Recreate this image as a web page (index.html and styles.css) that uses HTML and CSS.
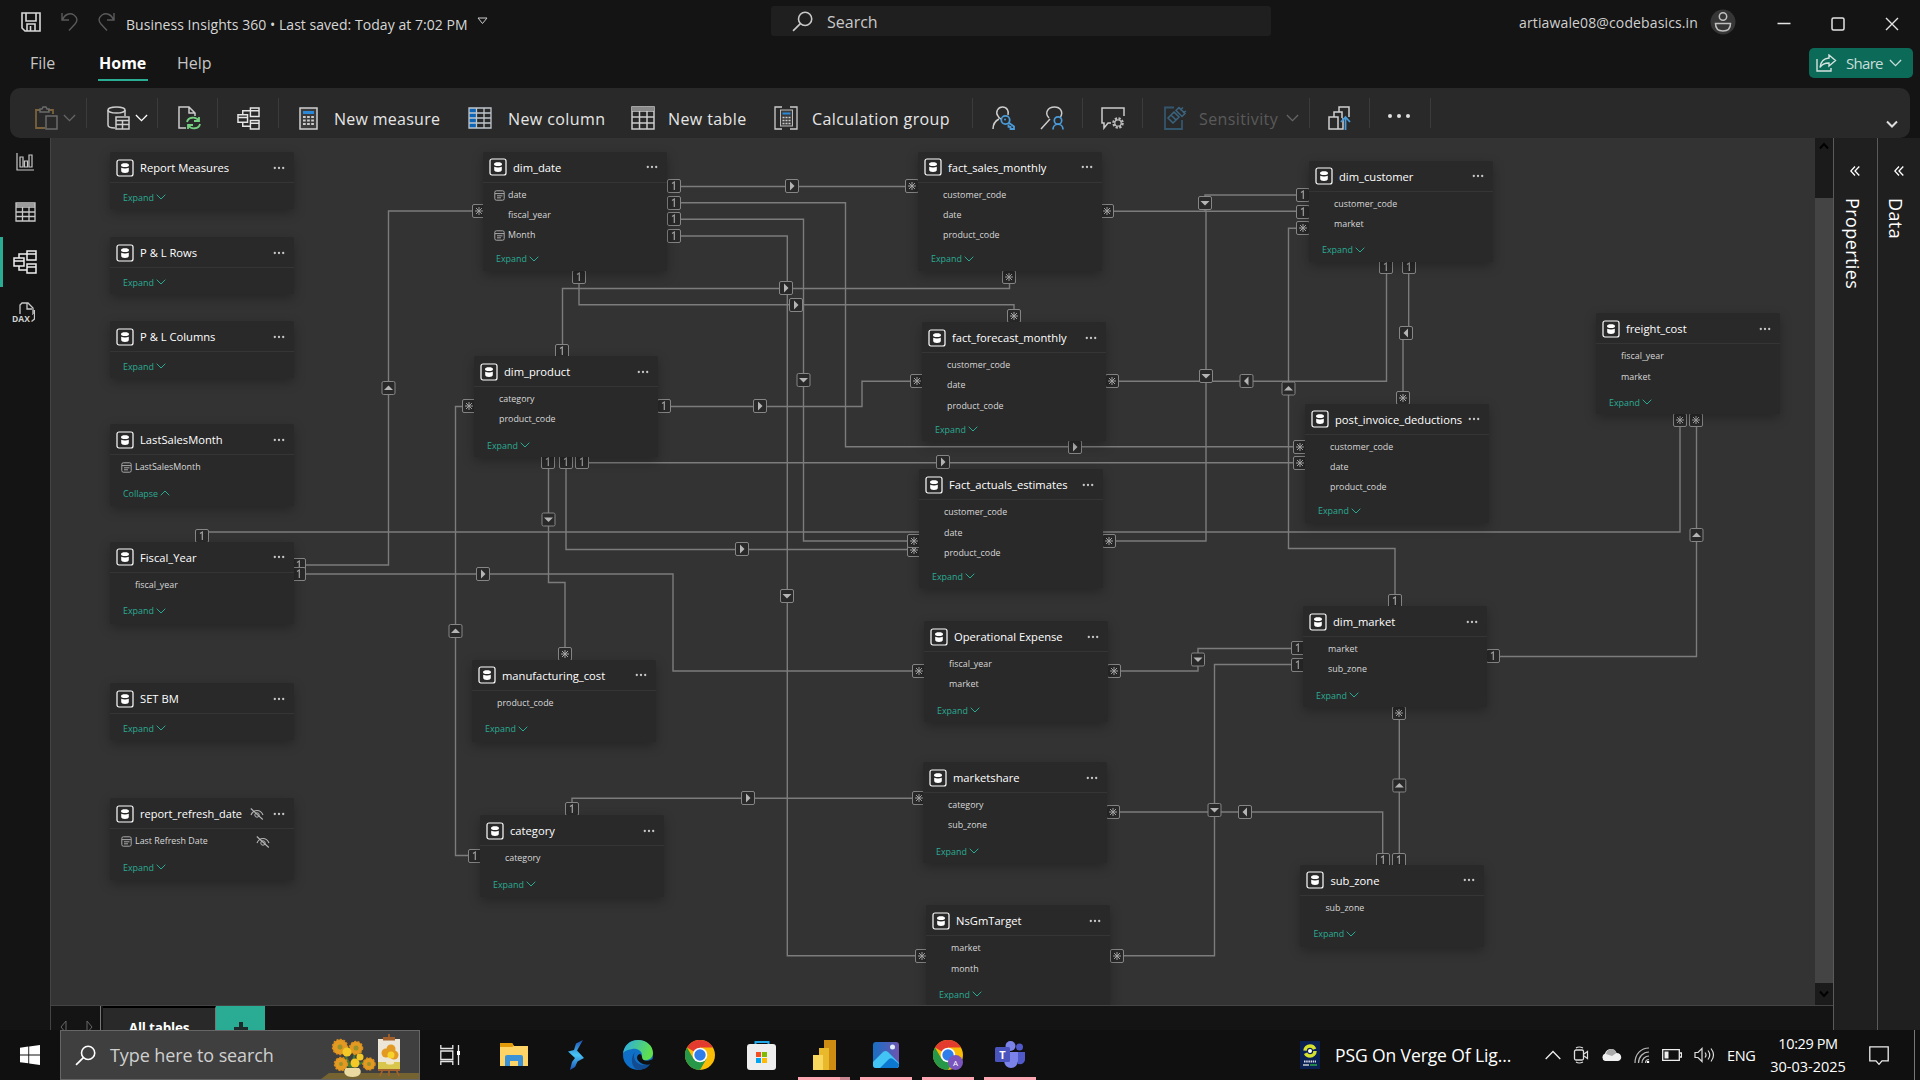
FILE: index.html
```html
<!DOCTYPE html>
<html lang="en">
<head>
<meta charset="utf-8">
<title>Business Insights 360</title>
<link rel="stylesheet" href="styles.css">
</head>
<body>
<svg class="defs" width="0" height="0" aria-hidden="true">
  <defs>
    <symbol id="table" viewBox="0 0 18 18"><rect x="1" y="1" width="16" height="16" rx="2" fill="none" stroke="#fff" stroke-width="1.2"/><path d="M5 6.2C5 4.6 6.6 4.2 9 4.2s4 .4 4 2c0 1-1 1.8-4 1.8S5 7.2 5 6.2zM5.2 8.7c2 1 5.600 1 7.600 0V12c0 1.300-1.500 1.900-3.800 1.900S5.200 13.300 5.200 12z" fill="#fff"/></symbol>
    <symbol id="dots" viewBox="0 0 12 4"><g fill="#c8c8c8"><circle cx="1.800" cy="2" r="1.150"/><circle cx="6" cy="2" r="1.150"/><circle cx="10.200" cy="2" r="1.150"/></g></symbol>
    <symbol id="down" viewBox="0 0 10 6"><path d="M.7.7 5 5 9.300.7" fill="none" stroke="currentColor"/></symbol>
    <symbol id="up" viewBox="0 0 10 6"><path d="M.7 5.300 5 1l4.300 4.300" fill="none" stroke="currentColor"/></symbol>
    <symbol id="date" viewBox="0 0 11 11"><rect x=".8" y=".8" width="9.400" height="9.400" rx="1.600" fill="none" stroke="#a8a8a8"/><path d="M1 3.600h9M3 5.800h5.500M3 7.800h4" stroke="#a8a8a8" fill="none"/></symbol>
    <symbol id="hidden" viewBox="0 0 14 12"><path d="M1 7C2.500 3.500 5 2.500 7 2.500S11.500 3.500 13 7M.8.5l12 11" fill="none" stroke="#b5b5b5" stroke-width="1.100"/><circle cx="7" cy="7" r="2.200" fill="none" stroke="#b5b5b5"/></symbol>
    <g id="one"><g transform="translate(7 7)"><rect x="-6.500" y="-6.500" width="13" height="13" rx="1.500" fill="#292929" stroke="#868686"/><path d="M-2-2.500.3-4V4" fill="none" stroke="#a5a5a5" stroke-width="1.200"/></g></g>
    <g id="many"><g transform="translate(7 7)"><rect x="-6.500" y="-6.500" width="13" height="13" rx="1.500" fill="#292929" stroke="#868686"/><path d="M0-4V4M-4 0H4M-3-3 3 3M3-3-3 3" fill="none" stroke="#a8a8a8"/></g></g>
    <g id="dir"><g transform="translate(7 7)"><rect x="-6.500" y="-6.500" width="13" height="13" rx="1.500" fill="#292929" stroke="#868686"/><path d="M-2-4.500 2.500 0-2 4.500z" fill="#b4b4b4"/></g></g>
    <symbol id="chrome" viewBox="0 0 30 30"><circle cx="15" cy="15" r="15" fill="#fbbc05"/><path d="M15 15 2 7.500A15 15 0 0 1 28 7.500H15z" fill="#e33b2e"/><path d="M2 7.500A15 15 0 0 0 15 30l6.500-11.300L15 15 8.500 18.800z" fill="#279847"/><circle cx="15" cy="15" r="7.300" fill="#fff"/><circle cx="15" cy="15" r="5.700" fill="#2f7de9"/></symbol>
    <symbol id="model" viewBox="0 0 24 24"><path d="M1 8h10v8H1zM14 1h9v9h-9zM14 14h9v9h-9zM1 11h10M14 4h9M14 17h9M6 8V4h8M6 16v4h8" fill="none" stroke="currentColor" stroke-width="1.500"/></symbol>
    <symbol id="glass" viewBox="0 0 20 20"><circle cx="12.500" cy="7.500" r="6.300" fill="none" stroke="currentColor" stroke-width="1.500"/><path d="M8 12 1 19" stroke="currentColor" stroke-width="1.600"/></symbol>
  </defs>
</svg>

<div class="app">
  <header class="titlebar">
    <div class="quick">
      <svg width="20" height="20" viewBox="0 0 20 20"><path d="M1 1h18v18H4l-3-3zM5 1v8h10V1M6 19v-7h8v7M9.500 14v5" fill="none" stroke="#d8d8d8" stroke-width="1.600"/></svg>
      <svg width="17" height="19" viewBox="0 0 17 19"><path d="M1 1v7h7M1.500 7.500C4 2 9 .5 13 3c4 3 3.500 6 1 9l-6 6.500" fill="none" stroke="#5a5a5a" stroke-width="1.400"/></svg>
      <svg width="17" height="19" viewBox="0 0 17 19"><path d="M16 1v7H9M15.500 7.500C13 2 8 .5 4 3 0 6 .5 9 3 12l6 6.500" fill="none" stroke="#5a5a5a" stroke-width="1.400"/></svg>
    </div>
    <span class="doc-title">Business Insights 360 • Last saved: Today at 7:02 PM</span>
    <svg class="doc-caret" width="11" height="8" viewBox="0 0 11 8"><path d="M1 1h9L5.500 6.500z" fill="none" stroke="#ccc"/></svg>
    <div class="search"><svg width="21" height="21"><use href="#glass"/></svg><span class="search-text">Search</span></div>
    <div class="account">
      <span class="email">artiawale08@codebasics.in</span>
      <svg width="26" height="26" viewBox="0 0 26 26"><circle cx="13" cy="13" r="12.500" fill="#363636"/><circle cx="13" cy="7.500" r="3.700" fill="none" stroke="#c0c0c0" stroke-width="1.500"/><path d="M5.500 14.500h15c0 5-3 7.500-7.500 7.500s-7.500-2.500-7.500-7.500z" fill="none" stroke="#c0c0c0" stroke-width="1.500"/></svg>
    </div>
    <div class="window-buttons">
      <svg width="14" height="14" viewBox="0 0 14 14"><path d="M.5 6.500h13" stroke="#e4e4e4" stroke-width="1.500"/></svg>
      <svg width="14" height="14" viewBox="0 0 14 14"><rect x="1" y="1" width="12" height="12" rx="1.500" fill="none" stroke="#e4e4e4" stroke-width="1.500"/></svg>
      <svg width="14" height="14" viewBox="0 0 14 14"><path d="m1 1 12 12M13 1 1 13" stroke="#e4e4e4" stroke-width="1.400"/></svg>
    </div>
  </header>

  <nav class="menu">
    <span class="tab">File</span><span class="tab tab-home">Home</span><span class="tab">Help</span>
    <button class="share">
      <svg width="21" height="18" viewBox="0 0 21 18"><path d="M1 5v12h14v-3M13 1l6.500 5.500L13 12V9C9 9 6 10 4 13.500 4.500 8 8 4.500 13 4z" fill="none" stroke="#d5e4e0" stroke-width="1.400"/></svg>
      <span class="share-text">Share</span>
      <svg width="13" height="8"><use href="#down"/></svg>
    </button>
  </nav>

  <div class="ribbon">
    <div class="group g-paste">
      <svg width="23" height="24" viewBox="0 0 23 24"><path d="M10 22H1V4h4M13 4h5v4" fill="none" stroke="#7b623a" stroke-width="1.800"/><path d="M5 6V3h2l1-2h3l1 2h2v3zM11 10h11v13H11z" fill="none" stroke="#6b6b6b" stroke-width="1.500"/></svg>
      <svg class="dim" width="13" height="8"><use href="#down"/></svg>
    </div>
    <div class="group g-data">
      <svg width="23" height="24" viewBox="0 0 23 24"><path d="M1 4v15c0 2 3 3 7 3M18 4v6" fill="none" stroke="#ccc" stroke-width="1.500"/><ellipse cx="9.500" cy="4" rx="8.500" ry="3" fill="none" stroke="#ccc" stroke-width="1.500"/><path d="M9 11h13v12H9zM9 14.500h13M9 18.500h13M15.500 14v9" fill="none" stroke="#ccc" stroke-width="1.500"/></svg>
      <svg class="bright" width="13" height="8"><use href="#down"/></svg>
    </div>
    <div class="group g-icon"><svg class="refresh" width="23" height="24" viewBox="0 0 23 24"><path d="M8 22H1V1h10l6 6v3M11 1v6h6" fill="none" stroke="#ccc" stroke-width="1.500"/><path d="M9 16c1-5 9-6 12-1M21 11v4h-5M22 18c-1 5-9 6-12 1M10 23v-4h5" fill="none" stroke="#74cf80" stroke-width="1.800"/></svg></div>
    <div class="group g-icon model-icon"><svg width="23" height="23"><use href="#model"/></svg></div>
    <div class="group g-new">
      <svg width="19" height="23" viewBox="0 0 19 23"><rect x="1" y="1" width="17" height="21" fill="#3b3b3b" stroke="#d0d0d0" stroke-width="1.500"/><path d="M4 4h11v3H4z" fill="#2b88d8"/><path d="M4 10h11M4 13.500h11M4 17h11" stroke="#ccc" stroke-width="2" stroke-dasharray="2.700 1.400"/></svg>
      <span class="label l-measure">New measure</span>
      <svg width="24" height="22" viewBox="0 0 24 22"><path d="M1 1h8v20H1z" fill="#0f65b5"/><path d="M1 1h22v20H1zM8.500 1v20M16 1v20M1 6h22M1 11h22M1 16h22" fill="none" stroke="#bfc6cc" stroke-width="1.300"/></svg>
      <span class="label l-column">New column</span>
      <svg width="24" height="24" viewBox="0 0 24 24"><path d="M1 1h22v22H1zM1 5h22M1 11h22M1 17h22M8.500 5v18M16 5v18" fill="none" stroke="#ccc" stroke-width="1.500"/><path d="M1 1h22v4H1z" fill="#888"/></svg>
      <span class="label l-table">New table</span>
      <svg width="24" height="24" viewBox="0 0 24 24"><path d="M8 1H1v22h7M16 1h7v22h-7" fill="none" stroke="#ccc" stroke-width="1.300"/><rect x="6.500" y="4" width="12" height="16" fill="#3b3b3b" stroke="#bbb"/><path d="M8.500 6.500h8v2h-8z" fill="#2b88d8"/><path d="M8.500 11.500h8M8.500 14.500h8M8.500 17.500h8" stroke="#ccc" stroke-width="1.500" stroke-dasharray="2 1"/></svg>
      <span class="label l-group">Calculation group</span>
    </div>
    <div class="group g-roles">
      <svg width="24" height="24" viewBox="0 0 24 24"><path d="M1 23c0-5 2-8 6-10M16 9c1-4-1-8-5.500-8S3 6 6 10c1 2 3 3 4 3" fill="none" stroke="#ccc" stroke-width="1.500"/><path d="m16.500 16.500 5.500 4V23h-3.500v-2.200h-2V18.500" fill="none" stroke="#4a9bd8" stroke-width="1.800"/><circle cx="13.500" cy="14" r="4.200" fill="none" stroke="#4a9bd8" stroke-width="1.800"/><circle cx="13" cy="13.500" r="1" fill="#4a9bd8"/></svg>
      <svg width="24" height="24" viewBox="0 0 24 24"><path d="M1 23 10 13M9 12C4 7 8 1 14.500 1c6 0 9 5 6 10" fill="none" stroke="#ccc" stroke-width="1.500"/><circle cx="18" cy="14.500" r="3.700" fill="none" stroke="#4a9bd8" stroke-width="1.700"/><path d="M13 23.500c0-7 10-7 10 0" fill="none" stroke="#4a9bd8" stroke-width="1.700"/></svg>
    </div>
    <div class="group g-icon"><svg width="24" height="24" viewBox="0 0 24 24"><path d="M10 17H7l-4 5v-5H1V2h22v8" fill="none" stroke="#ccc" stroke-width="1.500"/><circle cx="17" cy="17" r="4.600" fill="none" stroke="#bbb" stroke-width="2.400" stroke-dasharray="2.200 1.400"/><circle cx="17" cy="17" r="3.200" fill="none" stroke="#bbb" stroke-width="1.300"/></svg></div>
    <div class="group g-sens">
      <svg width="23" height="24" viewBox="0 0 23 24"><path d="M10 1.500H1V23h17V14" fill="none" stroke="#33566d" stroke-width="1.800"/><path d="m4 12 6-6 5 5-6 6zM7 9l5 5M12 4.500l3-3 6 6-3 3zM16 4l3-2.500M19 7l3-2" fill="none" stroke="#3a6580" stroke-width="1.500"/></svg>
      <span class="label l-sens">Sensitivity</span>
      <svg class="dim" width="13" height="8"><use href="#down"/></svg>
    </div>
    <div class="group g-icon"><svg width="24" height="24" viewBox="0 0 24 24"><path d="M1 11h9v12H1zM6 11V6h8v6M11 6V1h10v10M10 23h5V12" fill="none" stroke="#d0d0d0" stroke-width="1.500"/><path d="M17.500 24V12M13 16l4.500-5 4.500 5" fill="none" stroke="#4a9bd8" stroke-width="1.800"/></svg></div>
    <div class="group g-icon more"><svg width="24" height="6" viewBox="0 0 24 6"><g fill="#e0e0e0"><circle cx="3" cy="3" r="2"/><circle cx="12" cy="3" r="2"/><circle cx="21" cy="3" r="2"/></g></svg></div>
    <svg class="collapse" width="12" height="8" viewBox="0 0 12 8"><path d="m1 1.500 5 5 5-5" fill="none" stroke="#ddd" stroke-width="2"/></svg>
  </div>

  <main class="workspace">
    <aside class="rail">
      <div class="rail-item"><svg width="18" height="18" viewBox="0 0 18 18"><path d="M1 0v17h17M4 14V4h3v10zM8.500 14V8h3v6zM13 14V2h3v12z" fill="none" stroke="#c8c8c8" stroke-width="1.200"/></svg></div>
      <div class="rail-item"><svg width="21" height="20" viewBox="0 0 21 20"><path d="M1 1h19v18H1zM1 5h19M1 10h19M1 14.500h19M7.500 5v14M14 5v14M1 3h19" fill="none" stroke="#c8c8c8" stroke-width="1.300"/></svg></div>
      <div class="rail-item active"><svg width="24" height="24"><use href="#model"/></svg></div>
      <div class="rail-item dax"><svg width="20" height="20" viewBox="0 0 20 20"><path d="M5 12V3l2-2h6l5 5v7M12 1v6h5M19.500 8v9l-3 2.500" fill="none" stroke="#c8c8c8" stroke-width="1.300"/></svg><span class="dax-text">DAX</span></div>
    </aside>

    <section class="center">
      <div class="view">
        <div class="canvas">
          <svg class="links" width="1764" height="867" viewBox="51 138 1764 867">
            <g class="wires">
              <path d="M299 565H388.500V211H479"/>
              <path d="M299 574H673V671H919"/>
              <path d="M202 532H1680V420"/>
              <path d="M673.500 186.500H912"/>
              <path d="M673.500 202.800H845.500V446.700H1300"/>
              <path d="M673.500 219.300H803.500V541H914"/>
              <path d="M673.500 236H787.300V955.700H921"/>
              <path d="M579 276V304.700H1014V315"/>
              <path d="M562.500 350V288.500H1009.500V276"/>
              <path d="M664 406.500H862V381.300H917"/>
              <path d="M548.500 462V582.500H565V653"/>
              <path d="M566 462V549.500H914"/>
              <path d="M582 462.700H1300"/>
              <path d="M469 406.500H455.500V855.500H474"/>
              <path d="M572 808V798.300H918"/>
              <path d="M1107 211.200H1303"/>
              <path d="M1303 195H1205V211H1206V541H1109"/>
              <path d="M1112 381.200H1386.500V267"/>
              <path d="M1408.700 267V333H1403V398"/>
              <path d="M1303 228.300H1288.500V548.500H1395V600"/>
              <path d="M1114 671H1198V648.500H1297"/>
              <path d="M1297 664.500H1214.500V955.700H1117"/>
              <path d="M1113 812H1382.700V859"/>
              <path d="M1399.300 859V712"/>
              <path d="M1493 656.500H1696.500V420"/>
            </g>
            <g class="ends">
              <use href="#one" x="292" y="558"/><use href="#one" x="292" y="567"/><use href="#one" x="195" y="529"/>
              <use href="#one" x="667" y="179"/><use href="#one" x="667" y="196"/><use href="#one" x="667" y="212"/><use href="#one" x="667" y="229"/>
              <use href="#one" x="572" y="270"/><use href="#one" x="555" y="344"/><use href="#one" x="657" y="399"/>
              <use href="#one" x="541" y="455"/><use href="#one" x="559" y="455"/><use href="#one" x="575" y="455"/>
              <use href="#one" x="468" y="849"/><use href="#one" x="565" y="802"/>
              <use href="#one" x="1296" y="188"/><use href="#one" x="1296" y="205"/><use href="#one" x="1379" y="260"/><use href="#one" x="1402" y="260"/>
              <use href="#one" x="1388" y="594"/><use href="#one" x="1291" y="641"/><use href="#one" x="1291" y="658"/><use href="#one" x="1486" y="649"/>
              <use href="#one" x="1376" y="853"/><use href="#one" x="1392" y="853"/>
              <use href="#many" x="472" y="204"/><use href="#many" x="905" y="179"/><use href="#many" x="910" y="374"/>
              <use href="#many" x="907" y="543"/><use href="#many" x="907" y="534"/><use href="#many" x="462" y="399"/><use href="#many" x="558" y="647"/>
              <use href="#many" x="912" y="664"/><use href="#many" x="912" y="791"/><use href="#many" x="915" y="949"/>
              <use href="#many" x="1002" y="270"/><use href="#many" x="1007" y="309"/><use href="#many" x="1100" y="204"/><use href="#many" x="1105" y="374"/>
              <use href="#many" x="1102" y="534"/><use href="#many" x="1107" y="664"/><use href="#many" x="1106" y="805"/><use href="#many" x="1110" y="949"/>
              <use href="#many" x="1296" y="221"/><use href="#many" x="1293" y="440"/><use href="#many" x="1293" y="456"/><use href="#many" x="1396" y="391"/>
              <use href="#many" x="1673" y="413"/><use href="#many" x="1689" y="413"/><use href="#many" x="1392" y="706"/>
            </g>
            <g class="arrows">
              <use href="#dir" x="-7" y="-7" transform="translate(388.500 388) rotate(-90)"/>
              <use href="#dir" x="476" y="567"/><use href="#dir" x="785" y="179"/><use href="#dir" x="1068" y="440"/>
              <use href="#dir" x="-7" y="-7" transform="translate(803.500 380) rotate(90)"/>
              <use href="#dir" x="-7" y="-7" transform="translate(787 596) rotate(90)"/>
              <use href="#dir" x="779" y="281"/><use href="#dir" x="789" y="298"/><use href="#dir" x="753" y="399"/>
              <use href="#dir" x="-7" y="-7" transform="translate(548.500 519.500) rotate(90)"/>
              <use href="#dir" x="735" y="542"/><use href="#dir" x="936" y="455"/><use href="#dir" x="741" y="791"/>
              <use href="#dir" x="-7" y="-7" transform="translate(455.500 631) rotate(-90)"/>
              <use href="#dir" x="-7" y="-7" transform="translate(1205 203) rotate(90)"/>
              <use href="#dir" x="-7" y="-7" transform="translate(1206 376) rotate(90)"/>
              <use href="#dir" x="-7" y="-7" transform="translate(1246.500 381) rotate(180)"/>
              <use href="#dir" x="-7" y="-7" transform="translate(1406 333) rotate(180)"/>
              <use href="#dir" x="-7" y="-7" transform="translate(1288.500 388.500) rotate(-90)"/>
              <use href="#dir" x="-7" y="-7" transform="translate(1198 659.500) rotate(90)"/>
              <use href="#dir" x="-7" y="-7" transform="translate(1214.500 810) rotate(90)"/>
              <use href="#dir" x="-7" y="-7" transform="translate(1245 812) rotate(180)"/>
              <use href="#dir" x="-7" y="-7" transform="translate(1399.300 785.500) rotate(-90)"/>
              <use href="#dir" x="-7" y="-7" transform="translate(1696.500 535) rotate(-90)"/>
            </g>
          </svg>

          <div class="board">
            <article class="node rows-0 n-report-measures"><header><svg class="t"><use href="#table"/></svg><h2>Report Measures</h2><svg class="d"><use href="#dots"/></svg></header><footer>Expand<svg><use href="#down"/></svg></footer></article>
            <article class="node rows-0 n-pl-rows"><header><svg class="t"><use href="#table"/></svg><h2>P &amp; L Rows</h2><svg class="d"><use href="#dots"/></svg></header><footer>Expand<svg><use href="#down"/></svg></footer></article>
            <article class="node rows-0 n-pl-columns"><header><svg class="t"><use href="#table"/></svg><h2>P &amp; L Columns</h2><svg class="d"><use href="#dots"/></svg></header><footer>Expand<svg><use href="#down"/></svg></footer></article>
            <article class="node rows-1 n-last-sales"><header><svg class="t"><use href="#table"/></svg><h2>LastSalesMonth</h2><svg class="d"><use href="#dots"/></svg></header><p><svg class="c"><use href="#date"/></svg>LastSalesMonth</p><footer>Collapse<svg><use href="#up"/></svg></footer></article>
            <article class="node rows-1 n-fiscal-year"><header><svg class="t"><use href="#table"/></svg><h2>Fiscal_Year</h2><svg class="d"><use href="#dots"/></svg></header><p>fiscal_year</p><footer>Expand<svg><use href="#down"/></svg></footer></article>
            <article class="node rows-0 n-set-bm"><header><svg class="t"><use href="#table"/></svg><h2>SET BM</h2><svg class="d"><use href="#dots"/></svg></header><footer>Expand<svg><use href="#down"/></svg></footer></article>
            <article class="node rows-1 n-refresh"><header><svg class="t"><use href="#table"/></svg><h2>report_refresh_date</h2><svg class="h"><use href="#hidden"/></svg><svg class="d"><use href="#dots"/></svg></header><p><svg class="c"><use href="#date"/></svg>Last Refresh Date<svg class="h"><use href="#hidden"/></svg></p><footer>Expand<svg><use href="#down"/></svg></footer></article>
            <article class="node rows-3 n-dim-date"><header><svg class="t"><use href="#table"/></svg><h2>dim_date</h2><svg class="d"><use href="#dots"/></svg></header><p><svg class="c"><use href="#date"/></svg>date</p><p>fiscal_year</p><p><svg class="c"><use href="#date"/></svg>Month</p><footer>Expand<svg><use href="#down"/></svg></footer></article>
            <article class="node rows-2 n-dim-product"><header><svg class="t"><use href="#table"/></svg><h2>dim_product</h2><svg class="d"><use href="#dots"/></svg></header><p>category</p><p>product_code</p><footer>Expand<svg><use href="#down"/></svg></footer></article>
            <article class="node rows-1 n-mfg-cost"><header><svg class="t"><use href="#table"/></svg><h2>manufacturing_cost</h2><svg class="d"><use href="#dots"/></svg></header><p>product_code</p><footer>Expand<svg><use href="#down"/></svg></footer></article>
            <article class="node rows-1 n-category"><header><svg class="t"><use href="#table"/></svg><h2>category</h2><svg class="d"><use href="#dots"/></svg></header><p>category</p><footer>Expand<svg><use href="#down"/></svg></footer></article>
            <article class="node rows-3 n-sales"><header><svg class="t"><use href="#table"/></svg><h2>fact_sales_monthly</h2><svg class="d"><use href="#dots"/></svg></header><p>customer_code</p><p>date</p><p>product_code</p><footer>Expand<svg><use href="#down"/></svg></footer></article>
            <article class="node rows-3 n-forecast"><header><svg class="t"><use href="#table"/></svg><h2>fact_forecast_monthly</h2><svg class="d"><use href="#dots"/></svg></header><p>customer_code</p><p>date</p><p>product_code</p><footer>Expand<svg><use href="#down"/></svg></footer></article>
            <article class="node rows-3 n-actuals"><header><svg class="t"><use href="#table"/></svg><h2>Fact_actuals_estimates</h2><svg class="d"><use href="#dots"/></svg></header><p>customer_code</p><p>date</p><p>product_code</p><footer>Expand<svg><use href="#down"/></svg></footer></article>
            <article class="node rows-2 n-opex"><header><svg class="t"><use href="#table"/></svg><h2>Operational Expense</h2><svg class="d"><use href="#dots"/></svg></header><p>fiscal_year</p><p>market</p><footer>Expand<svg><use href="#down"/></svg></footer></article>
            <article class="node rows-2 n-marketshare"><header><svg class="t"><use href="#table"/></svg><h2>marketshare</h2><svg class="d"><use href="#dots"/></svg></header><p>category</p><p>sub_zone</p><footer>Expand<svg><use href="#down"/></svg></footer></article>
            <article class="node rows-2 n-target"><header><svg class="t"><use href="#table"/></svg><h2>NsGmTarget</h2><svg class="d"><use href="#dots"/></svg></header><p>market</p><p>month</p><footer>Expand<svg><use href="#down"/></svg></footer></article>
            <article class="node rows-2 n-customer"><header><svg class="t"><use href="#table"/></svg><h2>dim_customer</h2><svg class="d"><use href="#dots"/></svg></header><p>customer_code</p><p>market</p><footer>Expand<svg><use href="#down"/></svg></footer></article>
            <article class="node rows-3 n-deductions"><header><svg class="t"><use href="#table"/></svg><h2>post_invoice_deductions</h2><svg class="d"><use href="#dots"/></svg></header><p>customer_code</p><p>date</p><p>product_code</p><footer>Expand<svg><use href="#down"/></svg></footer></article>
            <article class="node rows-2 n-freight"><header><svg class="t"><use href="#table"/></svg><h2>freight_cost</h2><svg class="d"><use href="#dots"/></svg></header><p>fiscal_year</p><p>market</p><footer>Expand<svg><use href="#down"/></svg></footer></article>
            <article class="node rows-2 n-market"><header><svg class="t"><use href="#table"/></svg><h2>dim_market</h2><svg class="d"><use href="#dots"/></svg></header><p>market</p><p>sub_zone</p><footer>Expand<svg><use href="#down"/></svg></footer></article>
            <article class="node rows-1 n-sub-zone"><header><svg class="t"><use href="#table"/></svg><h2>sub_zone</h2><svg class="d"><use href="#dots"/></svg></header><p>sub_zone</p><footer>Expand<svg><use href="#down"/></svg></footer></article>
          </div>
        </div>
        <div class="scrollbar">
          <div class="sb-top"><svg width="10" height="8" viewBox="0 0 10 8"><path d="m1 6.500 4-4.500 4 4.500" fill="none" stroke="#000" stroke-width="2"/></svg></div>
          <div class="sb-thumb"></div>
          <div class="sb-bottom"><svg width="10" height="8" viewBox="0 0 10 8"><path d="m1 1.500 4 4.500 4-4.500" fill="none" stroke="#000" stroke-width="2"/></svg></div>
        </div>
      </div>
      <div class="pages">
        <div class="page-nav">
          <svg width="7" height="14" viewBox="0 0 7 14"><path d="M6 1v12L1 7z" fill="none" stroke="#666"/></svg>
          <svg width="7" height="14" viewBox="0 0 7 14"><path d="M1 1v12l5-6z" fill="none" stroke="#666"/></svg>
        </div>
        <div class="page-tab">All tables</div>
        <div class="page-add"><svg width="14" height="14" viewBox="0 0 14 14"><path d="M7 0v14M0 7h14" stroke="#1c2b29" stroke-width="4"/></svg></div>
      </div>
    </section>

    <aside class="pane"><svg width="10" height="10" viewBox="0 0 10 10"><path d="M5 .5.8 5 5 9.500M9.300.5 5 5l4.300 4.500" fill="none" stroke="#fff" stroke-width="1.300"/></svg><span class="pane-title">Properties</span></aside>
    <aside class="pane"><svg width="10" height="10" viewBox="0 0 10 10"><path d="M5 .5.8 5 5 9.500M9.300.5 5 5l4.300 4.500" fill="none" stroke="#fff" stroke-width="1.300"/></svg><span class="pane-title">Data</span></aside>
  </main>

  <footer class="taskbar">
    <div class="start"><svg width="20" height="20" viewBox="0 0 20 20"><path d="M0 2.800 8.300 1.600v7.900H0zM9.200 1.500 20 0v9.500H9.200zM0 10.400h8.300v7.900L0 17.200zM9.200 10.400H20V20L9.200 18.500z" fill="#fff"/></svg></div>
    <div class="task-search">
      <svg width="21" height="21"><use href="#glass"/></svg>
      <span class="task-search-text">Type here to search</span>
      <svg class="flowers" width="98" height="48" viewBox="0 0 98 48">
        <path d="M0 48 8 42H98V48z" fill="#756431"/>
        <path d="M30 36 20 16M30 36 36 16M30 36 46 30M30 36 20 32" stroke="#3d7a32" stroke-width="2"/>
        <g fill="#e29a22" stroke="#d98d1c" stroke-width="1.500" stroke-dasharray="2 1.500"><circle cx="19" cy="16" r="7.500"/><circle cx="35" cy="17" r="6.500"/><circle cx="20" cy="33" r="6.500"/><circle cx="48" cy="33" r="6"/></g>
        <g fill="#f3c927"><circle cx="26" cy="21" r="4.500"/><circle cx="34" cy="32" r="4.500"/><circle cx="39" cy="26" r="3.500"/></g>
        <g fill="#99912b"><circle cx="19" cy="16" r="2.500"/><circle cx="35" cy="17" r="2.500"/><circle cx="20" cy="33" r="2"/><circle cx="48" cy="33" r="2"/></g>
        <path d="M25 37h13c4 4 1 9-6.500 9S21 41 25 37z" fill="#ead9a0"/>
        <path d="M62 38 59 45M75 38l3 7M68 3v42" stroke="#a2602c" stroke-width="1.800"/>
        <path d="M57 8h22v30H57z" fill="#ece6d8"/><path d="M57 31h22v7H57z" fill="#d9c64d"/><path d="M62 6h12v3.500H62zM57 38h22v2H57z" fill="#a2602c"/>
        <g fill="#e29a22"><circle cx="65" cy="22" r="4.500"/><circle cx="70" cy="18" r="4.500"/><circle cx="73" cy="24" r="4.500"/></g><circle cx="70" cy="24" r="3.500" fill="#f7d22d"/><path d="M65 30h8v2c0 2-8 2-8 0z" fill="#f2e7bd"/>
      </svg>
    </div>
    <div class="task-view"><svg width="20" height="20" viewBox="0 0 20 20"><path d="M.8 0v3.500h12V0M.8 20v-3.500h12V20M.8 6h12v8.500H.8zM18.500 0v20" fill="none" stroke="#e6e6e6" stroke-width="1.300"/><path d="M17 6h3v4h-3z" fill="#fff"/></svg></div>
    <div class="apps">
      <div class="app-icon"><svg width="28" height="24" viewBox="0 0 28 24"><path d="M0 0h12l2 3h14v20H0z" fill="#ffd466"/><path d="M0 0h12l2 3-2 1H0z" fill="#e39a08"/><path d="M5 23V14q0-2 2-2h14q2 0 2 2v9h-5v-5h-8v5z" fill="#3c92d6"/></svg></div>
      <div class="app-icon"><svg width="16" height="30" viewBox="0 0 16 30"><defs><linearGradient id="sg" x1="0" y1="0" x2="0" y2="1"><stop offset="0" stop-color="#1e50b4"/><stop offset=".5" stop-color="#48c5f6"/><stop offset="1" stop-color="#1d53ba"/></linearGradient></defs><path d="M15 0 8 3.500 6 10l-6 1.500L7 18l-3 4-2 8 5-3 2.500-5.500L16 18 9 10.500z" fill="url(#sg)"/></svg></div>
      <div class="app-icon"><svg width="30" height="30" viewBox="0 0 30 30"><defs><linearGradient id="eg" x1="0" y1="0" x2="1" y2=".3"><stop offset="0" stop-color="#2aa9ee"/><stop offset="1" stop-color="#5fe04c"/></linearGradient></defs><circle cx="15" cy="15" r="15" fill="#0f6fc6"/><path d="M0 14C1 5 7 0 15 0c9 0 15 6 15 13 0 6-6 8-10 7-3-1-1-3-1-5 0-4-5-7-10-6S1 11 0 14z" fill="url(#eg)"/><path d="M12 12c-3 6 1 13 9 13 3 0 5-1 7-2-3 5-8 7-13 7C8 28 7 17 12 12z" fill="#124b8f"/><path d="M19 17c0 4 5 5 11 2l-2 5c-6 2-13-1-14-6 0-3 2-4 3-4s2 2 2 3z" fill="#101010"/></svg></div>
      <div class="app-icon"><svg width="30" height="30"><use href="#chrome"/></svg></div>
      <div class="app-icon"><svg width="30" height="30" viewBox="0 0 30 30"><path d="M8.500 5V2h13v3" fill="none" stroke="#20a8e8" stroke-width="2"/><rect y="4" width="29" height="26" rx="3" fill="#eee"/><path d="M9 12h5v5H9z" fill="#f25022"/><path d="M15 12h5v5h-5z" fill="#7fba00"/><path d="M9 18h5v5H9z" fill="#00a4ef"/><path d="M15 18h5v5h-5z" fill="#ffb900"/></svg></div>
      <div class="app-icon running split"><svg width="24" height="30" viewBox="0 0 24 30"><path d="M12 0h12v30H12z" fill="#cf8c12"/><path d="M7 8h10v22H7z" fill="#e9b82b"/><path d="M1 15h10v15H1z" fill="#f7d85c"/></svg></div>
      <div class="app-icon running"><svg width="26" height="26" viewBox="0 0 26 26"><defs><linearGradient id="ph" x1="0" y1="0" x2="1" y2="0"><stop offset="0" stop-color="#176fc3"/><stop offset="1" stop-color="#6c55b2"/></linearGradient></defs><rect width="26" height="26" rx="3" fill="url(#ph)"/><path d="M0 20 10 10q2.500-2 5 0l11 11v2q0 3-3 3H3q-3 0-3-3z" fill="#42c5f5"/><path d="m7 26 9-9q2-1.500 4 0l6 5q0 4-3 4z" fill="#0c78cf"/><circle cx="19.500" cy="5" r="2.500" fill="#e4edf9"/></svg></div>
      <div class="app-icon running"><svg width="30" height="30" viewBox="0 0 30 30"><use href="#chrome" width="30" height="30"/><circle cx="22.500" cy="22.500" r="7.500" fill="#7a55bd"/><text x="22.500" y="25.500" text-anchor="middle" class="badge-letter">A</text></svg></div>
      <div class="app-icon running"><svg width="30" height="28" viewBox="0 0 30 28"><circle cx="15.500" cy="5" r="5" fill="#7b83eb"/><circle cx="24.500" cy="6" r="3.500" fill="#5059c9"/><path d="M21 11h9v8q-1 5-7 4z" fill="#5059c9"/><path d="M10 11h13v9q-1 7-7 7t-7-7z" fill="#7b83eb"/><rect y="6" width="15" height="15" rx="1.500" fill="#4b53bc"/><text x="7.500" y="17.500" text-anchor="middle" class="teams-letter">T</text></svg></div>
    </div>
    <div class="news">
      <svg width="20" height="28" viewBox="0 0 20 28"><path d="M0 0h20v28H0z" fill="#0a1f52"/><circle cx="10" cy="10" r="5" fill="none" stroke="#d5e02c" stroke-width="3.500" stroke-dasharray="13 2.700"/><circle cx="10" cy="10" r="2" fill="#fff"/><path d="M4 20.500h12" stroke="#d6dcec" stroke-width="2" stroke-dasharray="1.500 .7"/><path d="M3 24h6" stroke="#ccc" stroke-width="1.500"/><path d="M10 24h7" stroke="#2aa74a" stroke-width="1.500"/></svg>
      <span class="news-text">PSG On Verge Of Lig...</span>
    </div>
    <div class="tray">
      <svg width="16" height="10" viewBox="0 0 16 10"><path d="m.7 9 7.300-7.500L15.300 9" fill="none" stroke="#eee" stroke-width="1.300"/></svg>
      <svg width="16" height="18" viewBox="0 0 16 18"><rect x="1.500" y="4" width="9" height="10" rx="1.500" fill="none" stroke="#ddd" stroke-width="1.300"/><path d="m11 8 3.500-2.500v7L11 10M3 2q3-2 7 0M3 16q3 2 7 0" fill="none" stroke="#ddd" stroke-width="1.200"/></svg>
      <svg width="21" height="14" viewBox="0 0 21 14"><path d="M4 13a4 4 0 0 1 0-7.500C5 0 14-1 15.500 5 21 5 22 12 17 13z" fill="#f0f0f0"/><path d="M5 6C6 0 14-1 15.500 5L11 8z" fill="#aaa"/></svg>
      <svg width="16" height="16" viewBox="0 0 16 16"><path d="M1 16C1 7 7 1 15 1M4.500 16C4.500 10 9 5 15 5M8 16c0-4 3-7 7-7M11.500 16c0-2 1.500-3.500 3.500-3.500" fill="none" stroke="#bbb" stroke-width="1.200"/><circle cx="14" cy="15" r="1.300" fill="#fff"/></svg>
      <svg width="20" height="12" viewBox="0 0 20 12"><path d="M.7.7h16.600v10.600H.7zM18 4h1.500v4H18" fill="none" stroke="#eee" stroke-width="1.300"/><path d="M2.500 2.500h4v7h-4z" fill="#eee"/></svg>
      <svg width="21" height="16" viewBox="0 0 21 16"><path d="M1 5.500h3l4-4v13l-4-4H1zM11 5.500q2 2.500 0 5M14 3.500q3.500 4.500 0 9M17 1.500q5 6.500 0 13" fill="none" stroke="#ddd" stroke-width="1.200"/></svg>
      <span class="lang">ENG</span>
      <div class="clock"><span class="c-time">10:29 PM</span><span class="c-date">30-03-2025</span></div>
      <svg class="notice" width="20" height="19" viewBox="0 0 20 19"><path d="M.8.8h18.400v14H13l-3 3.500-3-3.500H.8z" fill="none" stroke="#eee" stroke-width="1.300"/></svg>
    </div>
    <div class="peek"></div>
  </footer>
</div>
</body>
</html>
```
FILE: styles.css
```css
* { box-sizing: border-box; }
body { margin: 0; background: #141414; color: #e6e6e6; font-family: "Open Sans", "Noto Sans", sans-serif; overflow: hidden; }
svg { display: block; flex: none; }
.defs { position: absolute; }
.app { width: 1920px; height: 1080px; display: flex; flex-direction: column; overflow: hidden; }
h2, p { margin: 0; font-weight: 400; }

/* Title bar */
.titlebar { height: 42px; flex: none; display: flex; align-items: flex-start; padding-left: 21px; white-space: nowrap; }
.quick { display: flex; gap: 20px; width: 105px; padding-top: 12px; flex: none; }
.doc-title { width: 351px; font-size: 14px; line-height: 20px; padding-top: 15px; letter-spacing: 0.04px; color: #d6d6d6; flex: none; }
.doc-caret { margin-top: 17px; width: 11px; }
.search { margin: 6px 0 0 283px; width: 500px; height: 30px; flex: none; background: #1f1f1f; border-radius: 3px; display: flex; align-items: center; gap: 14px; padding-left: 21px; color: #c9c9c9; font-size: 16px; }
.search-text { letter-spacing: 0; padding-top: 1px; }
.account { width: 465px; margin-top: 9px; flex: none; display: flex; align-items: center; justify-content: flex-end; gap: 12px; color: #d0d0d0; font-size: 14px; }
.email { letter-spacing: 0.13px; }
.window-buttons { display: flex; gap: 40px; margin: 17px 0 0 41px; }

/* Menu tabs */
.menu { height: 46px; flex: none; display: flex; align-items: flex-start; padding-left: 30px; font-size: 16px; }
.tab { height: 39px; line-height: 42px; width: 68px; color: #c6c6c6; }
.tab-home { width: 50px; margin-right: 29px; padding-left: 1px; font-weight: 700; color: #fff; border-bottom: 2px solid #2aab94; }
.share { margin: 6px 7px 0 auto; width: 104px; height: 30px; border: 0; border-radius: 5px; background: #0c6b58; display: flex; align-items: center; padding: 0 0 0 7px; font: inherit; font-size: 15px; color: #c9ddd8; }
.share-text { width: 43px; margin-left: 9px; text-align: left; letter-spacing: -0.7px; }

/* Ribbon */
.ribbon { height: 50px; flex: none; margin: 0 10px; background: #292929; border-radius: 10px; display: flex; align-items: center; position: relative; z-index: 2; white-space: nowrap; }
.group { height: 30px; margin-top: -1px; border-right: 1px solid #3b3b3b; display: flex; align-items: center; padding-top: 11px; flex: none; }
.g-paste { width: 77px; padding-left: 25px; gap: 5px; }
.g-data { width: 71px; padding-left: 20px; gap: 5px; }
.g-icon { width: 60px; justify-content: center; }
.refresh { margin-left: 3px; }
.model-icon { width: 61px; }
.g-new { width: 694px; padding-left: 20px; }
.g-roles { width: 110px; padding-left: 19px; gap: 24px; }
.g-sens { width: 167px; padding-left: 21px; color: #5a5a5a; }
.more { padding-top: 7px; width: 61px; padding-right: 2px; }
.label { font-size: 16px; letter-spacing: 0.4px; padding: 2px 0 0 16px; }
.l-measure { width: 150px; letter-spacing: 0.27px; }
.l-column { width: 139px; }
.l-table { width: 119px; padding-left: 13px; }
.l-group { padding-left: 14px; }
.l-sens { width: 99px; padding-left: 12px; }
.dim { color: #666; }
.bright { color: #fff; }
.collapse { margin: 22px 12px 0 auto; }

/* Workspace */
.workspace { flex: none; height: 892px; display: flex; }
.rail { width: 50px; flex: none; margin-top: -1px; }
.rail-item { height: 50px; display: flex; align-items: center; justify-content: center; color: #eee; border-left: 3px solid transparent; padding-right: 3px; }
.rail-item.active { border-color: #2aab94; }
.dax { position: relative; }
.dax-text { position: absolute; left: 9px; bottom: 14px; font-size: 8.5px; line-height: 8px; font-weight: 700; color: #d0d0d0; background: #141414; }
.center { width: 1783px; flex: none; border-left: 1px solid #444; display: flex; flex-direction: column; }
.view { height: 867px; display: flex; flex: none; }
.canvas { width: 1764px; background: #333; position: relative; overflow: hidden; flex: none; }
.scrollbar { width: 18px; display: flex; flex-direction: column; background: #1b1b1b; }
.sb-top { height: 60px; display: flex; justify-content: center; padding-top: 4px; }
.sb-thumb { height: 785px; background: #444; }
.sb-bottom { height: 22px; display: flex; justify-content: center; align-items: center; }
.pages { height: 60px; border-top: 1px solid #444; display: flex; overflow: hidden; }
.page-nav { width: 50px; border-right: 1px solid #777; display: flex; gap: 19px; padding: 14px 0 0 9px; }
.page-tab { width: 113px; margin-left: 2px; border-top: 2px solid #000; border-right: 1px solid #777; background: #292929; color: #fff; font-size: 13.5px; font-weight: 700; letter-spacing: -0.2px; line-height: 41px; text-align: center; }
.page-add { width: 49px; height: 40px; background: #2aab94; display: flex; justify-content: center; padding-top: 16px; }
.pane { width: 44px; background: #1f1f1f; border-left: 1px solid #5a5a5a; display: flex; flex-direction: column; align-items: center; padding-top: 28px; gap: 22px; }
.pane-title { writing-mode: vertical-rl; color: #fff; font-size: 18px; line-height: 20px; margin-right: 5px; font-weight: 500; letter-spacing: 0.4px; }

/* Diagram */
.links { position: absolute; left: 0; top: 0; }
.wires path { fill: none; stroke: #7c7c7c; stroke-width: 1.4; }
.board { position: absolute; left: -51px; top: -138px; }
.node { position: absolute; width: 184px; background: #292929; border-radius: 2px; box-shadow: 0 4px 12px rgba(0, 0, 0, .28); display: flex; flex-direction: column; white-space: nowrap; }
.node header { height: 31px; flex: none; border-bottom: 1px solid #353535; display: flex; align-items: center; padding: 1px 9px 0 6px; margin-bottom: 2px; }
.node h2 { font-size: 11.2px; line-height: 16px; color: #fff; margin: 1px auto 0 6px; }
.node .t { width: 18px; height: 18px; }
.node .d { width: 12px; height: 4px; }
.node .c { width: 11px; height: 11px; position: absolute; left: -14px; top: 5px; }
.node header .h { width: 14px; height: 12px; margin-right: 9px; }
.node p .h { width: 14px; height: 12px; position: absolute; left: 121px; top: 5px; }
.node p { position: relative; height: 20.3px; flex: none; margin-left: 25px; font-size: 8.9px; line-height: 20px; color: #d8d8d8; }
.node footer { margin-top: auto; height: 24px; padding-left: 13px; display: flex; align-items: center; gap: 2px; font-size: 8.9px; color: #2aab94; }
.node footer svg { width: 10px; height: 6px; }
.rows-0 { height: 57px; }
.rows-1 { height: 82px; }
.rows-2 { height: 101px; }
.rows-3 { height: 119px; }
.rows-0 footer { height: 27px; }
.rows-1 footer { height: 26px; }
.n-report-measures { left: 110px; top: 152px; }
.n-pl-rows { left: 110px; top: 237.4px; }
.n-pl-columns { left: 110px; top: 321px; }
.n-last-sales { left: 110px; top: 424px; }
.n-fiscal-year { left: 110px; top: 541.5px; }
.n-set-bm { left: 110px; top: 683px; }
.n-refresh { left: 110px; top: 798px; }
.n-refresh h2 { font-size: 11px; }
.n-dim-date { left: 483px; top: 151.5px; }
.n-dim-product { left: 474px; top: 356px; }
.n-mfg-cost { left: 472px; top: 659.5px; }
.n-category { left: 480px; top: 815px; }
.n-sales { left: 918px; top: 151.5px; }
.n-forecast { left: 922px; top: 322px; }
.n-actuals { left: 919px; top: 469.4px; }
.n-opex { left: 924px; top: 621px; }
.n-marketshare { left: 923px; top: 762px; }
.n-target { left: 926px; top: 905.4px; }
.n-customer { left: 1309px; top: 160.6px; }
.n-deductions { left: 1305px; top: 403.7px; }
.n-freight { left: 1596px; top: 313.4px; }
.n-market { left: 1303px; top: 606px; }
.n-sub-zone { left: 1300.4px; top: 864.6px; }

/* Taskbar */
.taskbar { height: 50px; flex: none; background: #101010; display: flex; align-items: center; color: #fff; white-space: nowrap; }
.start { width: 60px; padding-left: 20px; }
.task-search { width: 360px; height: 50px; background: #3f3f3f; border: 1px solid #666; display: flex; align-items: center; padding-left: 14px; flex: none; overflow: hidden; }
.task-search-text { width: 211px; margin-left: 14px; font-size: 18px; letter-spacing: -0.1px; color: #cfcfcf; }
.flowers { margin-left: 2px; }
.task-view { width: 68px; padding-left: 20px; }
.apps { display: flex; }
.app-icon { width: 52px; height: 50px; margin-right: 10px; display: flex; align-items: center; justify-content: center; border-bottom: 3px solid transparent; padding-top: 3px; }
.running { border-color: #ffa6b3; }
.split { border-image: linear-gradient(90deg, #ffa6b3 78%, #c78690 78%) 3; border-width: 0 0 3px; border-style: solid; }
.badge-letter { font-size: 8px; fill: #fff; }
.teams-letter { font-size: 11px; font-weight: 700; fill: #fff; }
.news { display: flex; align-items: center; gap: 15px; margin-left: 254px; width: 245px; font-size: 17.5px; letter-spacing: -0.1px; }
.tray { display: flex; align-items: center; gap: 12px; font-size: 14.5px; }
.lang { width: 30px; letter-spacing: -0.3px; }
.clock { width: 78px; display: flex; flex-direction: column; align-items: center; line-height: 23px; }
.c-time { letter-spacing: -0.4px; }
.notice { margin-left: 10px; }
.peek { margin-left: auto; width: 6px; height: 50px; border-left: 1px solid #777; }
```
